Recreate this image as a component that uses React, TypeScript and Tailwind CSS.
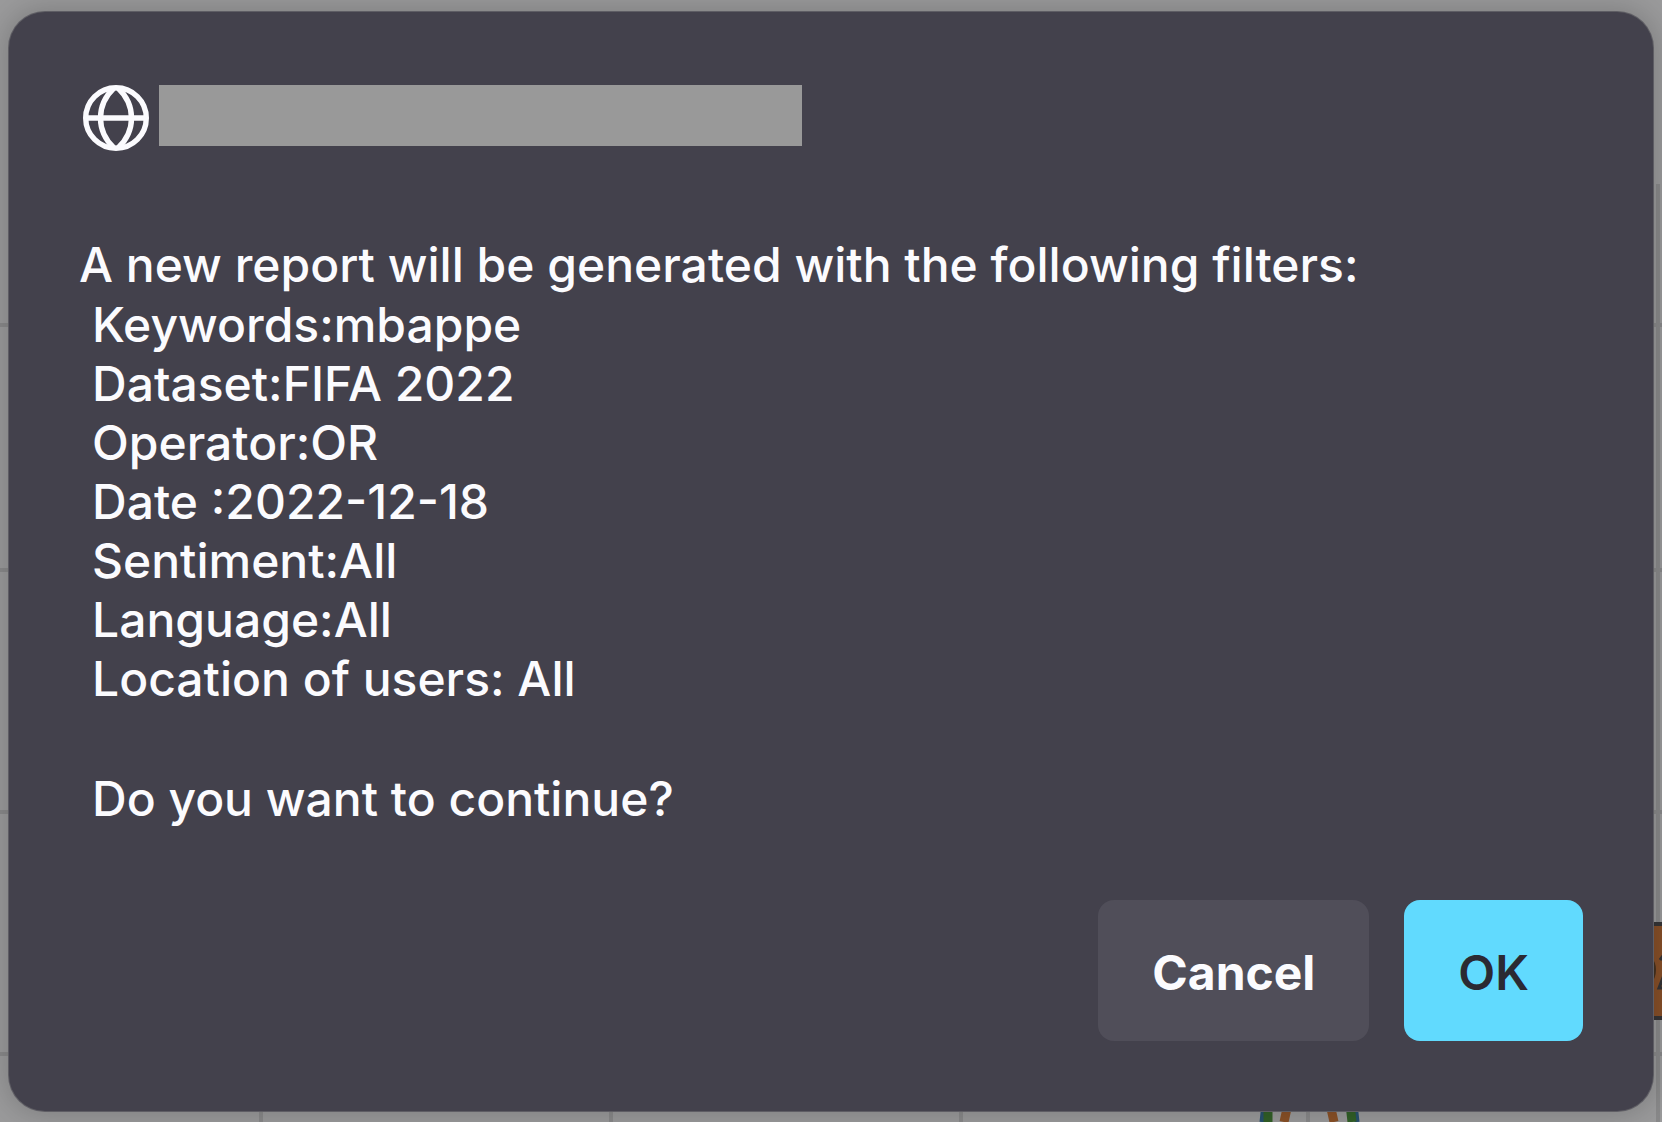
const filters = [
  "Keywords:mbappe",
  "Dataset:FIFA 2022",
  "Operator:OR",
  "Date :2022-12-18",
  "Sentiment:All",
  "Language:All",
  "Location of users: All",
];

function GlobeIcon() {
  return (
    <svg className="size-[66px] shrink-0" viewBox="0 0 66 66" fill="none" stroke="#fbfbfe" strokeWidth="5.4" aria-hidden="true">
      <circle cx="33" cy="33" r="30.3" />
      <path d="M3 33H63" />
      <path d="M31 3C13 20 13 46 31 63M35 3C53 20 53 46 35 63" />
    </svg>
  );
}

function DimmedChart() {
  return (
    <svg className="absolute inset-0 size-full" viewBox="0 0 1662 1122" preserveAspectRatio="none" aria-hidden="true">
      <g stroke="#89898a" strokeWidth="4">
        <path d="M0 325H1662M0 570H1662M0 812H1662M0 1054H1662" />
        <path d="M261 1000V1122M611 1000V1122M961 1000V1122M1308 1000V1122M1658 184V1122" />
      </g>
      <path d="M1264 1104L1262 1122M1355 1104L1357 1122" stroke="#27506f" strokeWidth="5" />
      <path d="M1268 1104V1122M1350 1104L1352 1122" stroke="#326028" strokeWidth="9" />
      <path d="M1288 1104L1284 1122M1330 1104L1334 1122" stroke="#8a5127" strokeWidth="9" />
      <rect x="1600" y="924" width="100" height="94" fill="#864f28" stroke="#353436" strokeWidth="4" />
      <path d="M1653 962Q1656 970 1653 978" stroke="#44301f" strokeWidth="3" fill="none" />
      <path d="M1663 956L1660 960M1664 975L1659 988H1664" stroke="#353436" strokeWidth="3" fill="none" />
    </svg>
  );
}

export default function App() {
  return (
    <main className="relative flex min-h-screen flex-col overflow-hidden bg-[#9a9a9b] px-[9px] pt-3 pb-[11px] font-['Inter',sans-serif] text-[#fbfbfe]">
      <DimmedChart />
      <section
        role="dialog"
        aria-modal="true"
        aria-describedby="message"
        className="relative flex grow flex-col rounded-[36px] bg-[#43414c] px-[70px] pt-[73px] pb-[70px] shadow-[0_0_28px_4px_rgba(0,0,0,0.18),0_0_0_1px_#6a6970]"
      >
        <header className="flex items-start gap-[10px]">
          <div className="ml-1">
            <GlobeIcon />
          </div>
          <div className="h-[61px] w-[643px] bg-[#999999]" />
        </header>
        <div id="message" className="mt-[84px] text-[48px] leading-[59px] font-medium">
          <p>A new report will be generated with the following filters:</p>
          <ul className="mt-px pl-[13px]">
            {filters.map((line) => (
              <li key={line}>{line}</li>
            ))}
          </ul>
          <p className="mt-[61px] pl-[13px]">Do you want to continue?</p>
        </div>
        <footer className="mt-auto flex justify-end gap-[35px] text-[48px] leading-[60px]">
          <button type="button" className="h-[141px] rounded-2xl bg-[#504e59] px-[54px] pt-1 font-bold">
            Cancel
          </button>
          <button type="button" className="h-[141px] rounded-2xl bg-[#61dafe] px-[54px] pt-1 font-semibold text-[#2b2a33]">
            OK
          </button>
        </footer>
      </section>
    </main>
  );
}
